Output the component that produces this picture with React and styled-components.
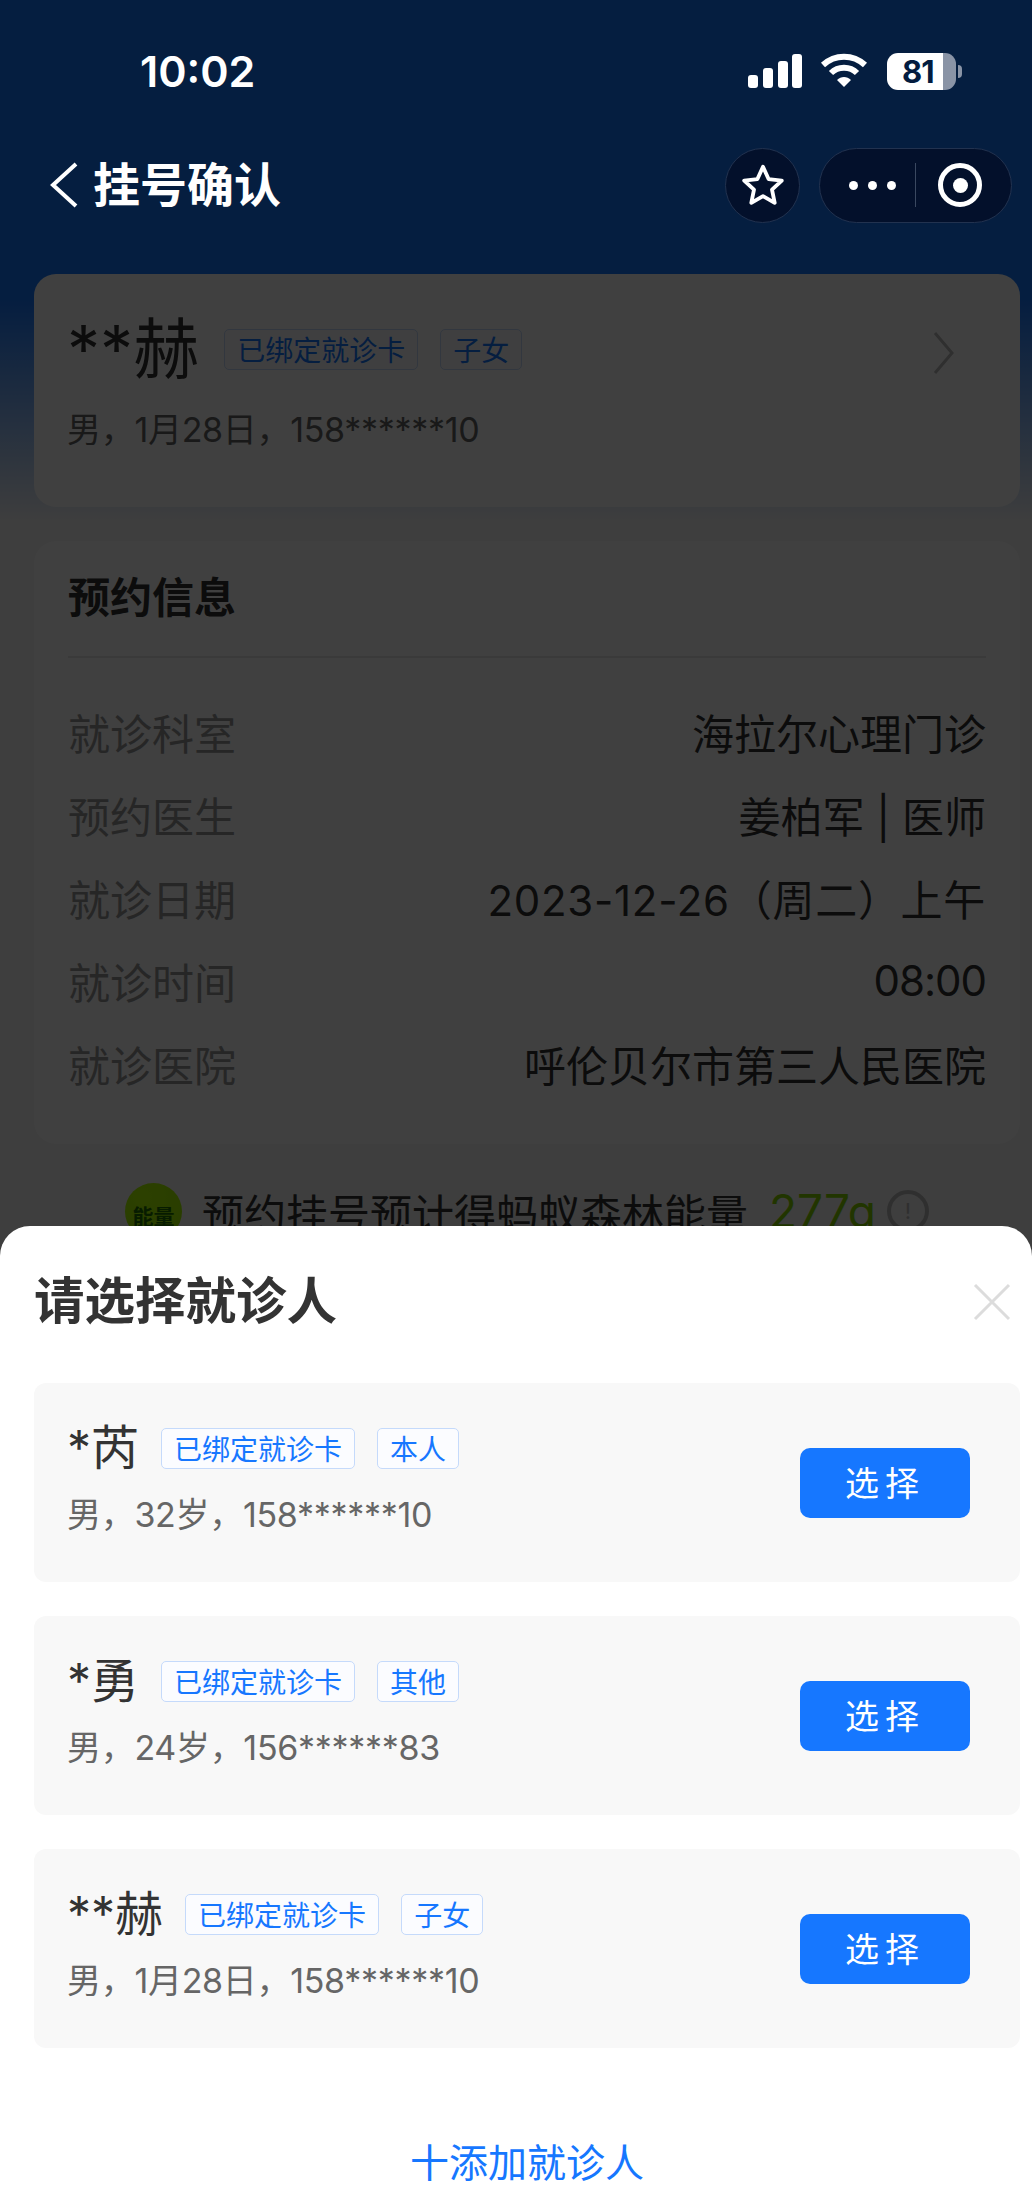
import React from 'react';
import styled, { createGlobalStyle } from 'styled-components';

const CJK = `Inter, "Noto Sans CJK SC", sans-serif`;

const GlobalStyle = createGlobalStyle`
  html, body { margin: 0; padding: 0; background: #3d3d3d; }
  * { box-sizing: border-box; }
  body { font-family: ${CJK}; }
`;

const Screen = styled.div`
  position: relative;
  width: 1032px;
  height: 2205px;
  overflow: hidden;
`;

/* page under the dim layer */
const Page = styled.div`
  height: 100%;
  padding: 274px 12px 0 34px;
  display: flex;
  flex-direction: column;
  background: linear-gradient(to bottom, #1677ff 0, #1677ff 300px, #f5f5f5 520px);
`;

const Card = styled.div`
  background: #fff;
  border-radius: 22px;
  padding: ${(p) => p.$padding};
  margin-bottom: 34px;
`;

const PatientCard = styled(Card)`
  height: 233px;
  position: relative;
`;

const CardChevron = styled.svg`
  position: absolute;
  right: 65px;
  top: 57px;
`;

const NameRow = styled.div`
  display: flex;
  align-items: center;
  height: 48px;
`;

const Name = styled.span`
  font-size: ${(p) => p.$size}px;
  line-height: 48px;
  color: #333;
  margin-right: ${(p) => p.$gap}px;
  white-space: nowrap;
`;

const Tag = styled.span`
  height: 41px;
  padding: 0 12px;
  margin-right: 22px;
  display: flex;
  align-items: center;
  font-size: 28px;
  color: #1677ff;
  background: #fbfcff;
  border: 1px solid #c5dafb;
  border-radius: 5px;
  white-space: nowrap;
`;

const Sub = styled.div`
  margin-top: ${(p) => p.$top}px;
  font-size: 34px;
  line-height: 46px;
  letter-spacing: -0.3px;
  color: #666;
  white-space: nowrap;
`;

const InfoTitle = styled.div`
  font-size: 42px;
  font-weight: 700;
  line-height: 58px;
  color: #333;
  padding-bottom: 29px;
  border-bottom: 2px solid #e6e6e6;
  margin-bottom: 32px;
`;

const InfoRow = styled.div`
  height: 83px;
  display: flex;
  justify-content: space-between;
  align-items: center;
  font-size: 42px;
`;

const InfoLabel = styled.span`
  color: #999;
`;

const InfoValue = styled.span`
  color: #333;
  letter-spacing: ${(p) => p.$tracking || 0}px;
`;

const EnergyRow = styled.div`
  display: flex;
  align-items: center;
  margin: 0 0 0 91px;
  height: 66px;
`;

const EnergyBadge = styled.div`
  width: 57px;
  height: 57px;
  border-radius: 50%;
  background: radial-gradient(circle at 30% 25%, #b0ff00, #a0f000);
  color: #1f7000;
  font-size: 21px;
  font-weight: 700;
  display: flex;
  align-items: center;
  justify-content: center;
  padding-top: 8px;
  margin-right: 20px;
  white-space: nowrap;
`;

const EnergyText = styled.span`
  font-size: 42px;
  color: #333;
  white-space: nowrap;
  margin-right: 21px;
`;

const EnergyAmount = styled.span`
  width: 94px;
  font-size: 46px;
  color: #84d400;
  margin-right: 24px;
  white-space: nowrap;
`;

const EnergyInfo = styled.div`
  width: 42px;
  height: 42px;
  border: 4px solid #bbb;
  border-radius: 50%;
  color: #bbb;
  font-size: 22px;
  display: flex;
  align-items: center;
  justify-content: center;
`;

const Dim = styled.div`
  position: absolute;
  inset: 0;
  background: rgba(0, 0, 0, 0.75);
`;

/* status bar and navigation stay bright above the dim layer */
const TopBar = styled.div`
  position: absolute;
  top: 0;
  left: 0;
  right: 0;
  color: #fff;
`;

const StatusBar = styled.div`
  height: 140px;
  padding: 50px 76px 0 140px;
  display: flex;
  justify-content: space-between;
  align-items: flex-start;
`;

const Time = styled.span`
  font-family: Inter, sans-serif;
  font-size: 43px;
  font-weight: 600;
  line-height: 43px;
`;

const StatusIcons = styled.div`
  display: flex;
  align-items: center;
  height: 38px;
  margin-top: 2px;
`;

const SignalBars = styled.svg`
  margin-right: 18px;
`;

const Battery = styled.div`
  position: relative;
  width: 69px;
  height: 37px;
  margin-left: 19px;
  border-radius: 11px;
  background: linear-gradient(to right, #fff 0, #fff 56px, #8a94a6 56px);
  color: #031c3f;
  font-family: Inter, sans-serif;
  font-size: 31px;
  font-weight: 700;
  line-height: 37px;
  padding-left: 15px;
  letter-spacing: -1px;

  &::after {
    content: '';
    position: absolute;
    right: -6px;
    top: 12px;
    width: 4px;
    height: 13px;
    border-radius: 0 4px 4px 0;
    background: #8a94a6;
  }
`;

const NavBar = styled.div`
  height: 90px;
  padding: 0 20px 0 50px;
  display: flex;
  align-items: center;
`;

const NavTitle = styled.span`
  font-size: 47px;
  font-weight: 700;
  line-height: 60px;
  margin-left: 15px;
  flex: 1;
`;

const RoundButton = styled.div`
  width: 75px;
  height: 75px;
  border-radius: 50%;
  background: #03102b;
  border: 1px solid #22324f;
  display: flex;
  align-items: center;
  justify-content: center;
  margin-right: 19px;
`;

const Capsule = styled.div`
  width: 193px;
  height: 75px;
  border-radius: 38px;
  background: #03102b;
  border: 1px solid #22324f;
  display: flex;
  align-items: center;
`;

const Dots = styled.div`
  width: 95px;
  padding-left: 29px;
  display: flex;
  gap: 10px;
`;

const Dot = styled.i`
  width: 9px;
  height: 9px;
  border-radius: 50%;
  background: #fff;
`;

const CapsuleLine = styled.div`
  width: 1px;
  height: 44px;
  background: #3a4860;
`;

const Target = styled.div`
  width: 44px;
  height: 44px;
  margin-left: 22px;
  border: 5px solid #fff;
  border-radius: 50%;
  display: flex;
  align-items: center;
  justify-content: center;

  &::after {
    content: '';
    width: 15px;
    height: 15px;
    border-radius: 50%;
    background: #fff;
  }
`;

const Sheet = styled.div`
  position: absolute;
  top: 1226px;
  left: 0;
  right: 0;
  bottom: 0;
  background: #fff;
  border-radius: 30px 30px 0 0;
  padding: 0 12px 0 34px;
  display: flex;
  flex-direction: column;
`;

const SheetHead = styled.div`
  height: 157px;
  padding-bottom: 6px;
  display: flex;
  align-items: center;
  justify-content: space-between;
`;

const SheetTitle = styled.h2`
  margin: 0 0 2px;
  font-size: 50.5px;
  font-weight: 700;
  line-height: 64px;
  color: #333;
`;

const CloseIcon = styled.svg`
  margin-right: 9px;
`;

const PersonList = styled.div`
  display: flex;
  flex-direction: column;
  gap: 34px;
`;

const PersonCard = styled.div`
  height: 199px;
  border-radius: 12px;
  background: #f8f8f8;
  padding: 0 50px 0 33px;
  display: flex;
  align-items: center;
  justify-content: space-between;
`;

const PersonInfo = styled.div`
  align-self: flex-start;
  padding-top: 41px;
`;

const SelectButton = styled.button`
  width: 170px;
  height: 70px;
  padding: 0 0 3px;
  border: none;
  border-radius: 10px;
  background: #1677ff;
  color: #fff;
  font-family: ${CJK};
  font-size: 34px;
  letter-spacing: 6px;
`;

const AddLink = styled.div`
  margin-top: 87px;
  text-align: center;
  font-size: 39px;
  line-height: 56px;
  color: #1677ff;
`;

const PatientBody = styled.div`
  padding: 51px 33px 0;
`;

const rows = [
  { label: '就诊科室', value: '海拉尔心理门诊' },
  { label: '预约医生', value: '姜柏军 | 医师' },
  { label: '就诊日期', value: '2023-12-26（周二）上午', tracking: 0.7 },
  { label: '就诊时间', value: '08:00', tracking: -1 },
  { label: '就诊医院', value: '呼伦贝尔市第三人民医院' },
];

const people = [
  { name: '*芮', tag: '本人', sub: '男，32岁，158******10' },
  { name: '*勇', tag: '其他', sub: '男，24岁，156******83' },
  { name: '**赫', tag: '子女', sub: '男，1月28日，158******10' },
];

const App = () => (
  <Screen>
    <GlobalStyle />
    <Page>
      <PatientCard>
        <PatientBody>
          <NameRow>
            <Name $size={66} $gap={25}>**赫</Name>
            <Tag>已绑定就诊卡</Tag>
            <Tag>子女</Tag>
          </NameRow>
          <Sub $top={34}>男，1月28日，158******10</Sub>
        </PatientBody>
        <CardChevron width="22" height="44" viewBox="0 0 22 44" fill="none">
          <path d="M2 2 L19 22 L2 42" stroke="#bbb" strokeWidth="3" />
        </CardChevron>
      </PatientCard>
      <Card $padding="28px 34px 39px">
        <InfoTitle>预约信息</InfoTitle>
        {rows.map((row) => (
          <InfoRow key={row.label}>
            <InfoLabel>{row.label}</InfoLabel>
            <InfoValue $tracking={row.tracking}>{row.value}</InfoValue>
          </InfoRow>
        ))}
      </Card>
      <EnergyRow>
        <EnergyBadge>能量</EnergyBadge>
        <EnergyText>预约挂号预计得蚂蚁森林能量</EnergyText>
        <EnergyAmount>277g</EnergyAmount>
        <EnergyInfo>!</EnergyInfo>
      </EnergyRow>
    </Page>
    <Dim />
    <TopBar>
      <StatusBar>
        <Time>10:02</Time>
        <StatusIcons>
          <SignalBars width="54" height="34" viewBox="0 0 54 34" fill="#fff">
            <rect x="0" y="21" width="10" height="13" rx="3" />
            <rect x="15" y="14" width="10" height="20" rx="3" />
            <rect x="30" y="7" width="10" height="27" rx="3" />
            <rect x="44" y="0" width="10" height="34" rx="3" />
          </SignalBars>
          <svg width="48" height="36" viewBox="0 0 48 36" fill="none" stroke="#fff" strokeWidth="6">
            <path d="M3 12 C15 1 33 1 45 12" />
            <path d="M11 20 C18 13 30 13 37 20" />
            <path d="M17 27 L24 34 L31 27 C27 23 21 23 17 27 Z" fill="#fff" stroke="none" />
          </svg>
          <Battery>81</Battery>
        </StatusIcons>
      </StatusBar>
      <NavBar>
        <svg width="28" height="46" viewBox="0 0 28 46" fill="none">
          <path d="M26 2 L3 23 L26 44" stroke="#fff" strokeWidth="4" />
        </svg>
        <NavTitle>挂号确认</NavTitle>
        <RoundButton>
          <svg width="46" height="46" viewBox="0 0 24 24" fill="none" stroke="#fff" strokeWidth="2" strokeLinejoin="round">
            <path d="M12 2.5 L14.9 8.9 L21.8 9.7 L16.7 14.4 L18.1 21.3 L12 17.8 L5.9 21.3 L7.3 14.4 L2.2 9.7 L9.1 8.9 Z" />
          </svg>
        </RoundButton>
        <Capsule>
          <Dots><Dot /><Dot /><Dot /></Dots>
          <CapsuleLine />
          <Target />
        </Capsule>
      </NavBar>
    </TopBar>
    <Sheet>
      <SheetHead>
        <SheetTitle>请选择就诊人</SheetTitle>
        <CloseIcon width="38" height="38" viewBox="0 0 38 38" fill="none" stroke="#dcdcdc" strokeWidth="3">
          <path d="M2 2 L36 36 M36 2 L2 36" />
        </CloseIcon>
      </SheetHead>
      <PersonList>
        {people.map((person) => (
          <PersonCard key={person.name}>
            <PersonInfo>
              <NameRow>
                <Name $size={48} $gap={22}>{person.name}</Name>
                <Tag>已绑定就诊卡</Tag>
                <Tag>{person.tag}</Tag>
              </NameRow>
              <Sub $top={20}>{person.sub}</Sub>
            </PersonInfo>
            <SelectButton>选择</SelectButton>
          </PersonCard>
        ))}
      </PersonList>
      <AddLink>十添加就诊人</AddLink>
    </Sheet>
  </Screen>
);

export default App;
